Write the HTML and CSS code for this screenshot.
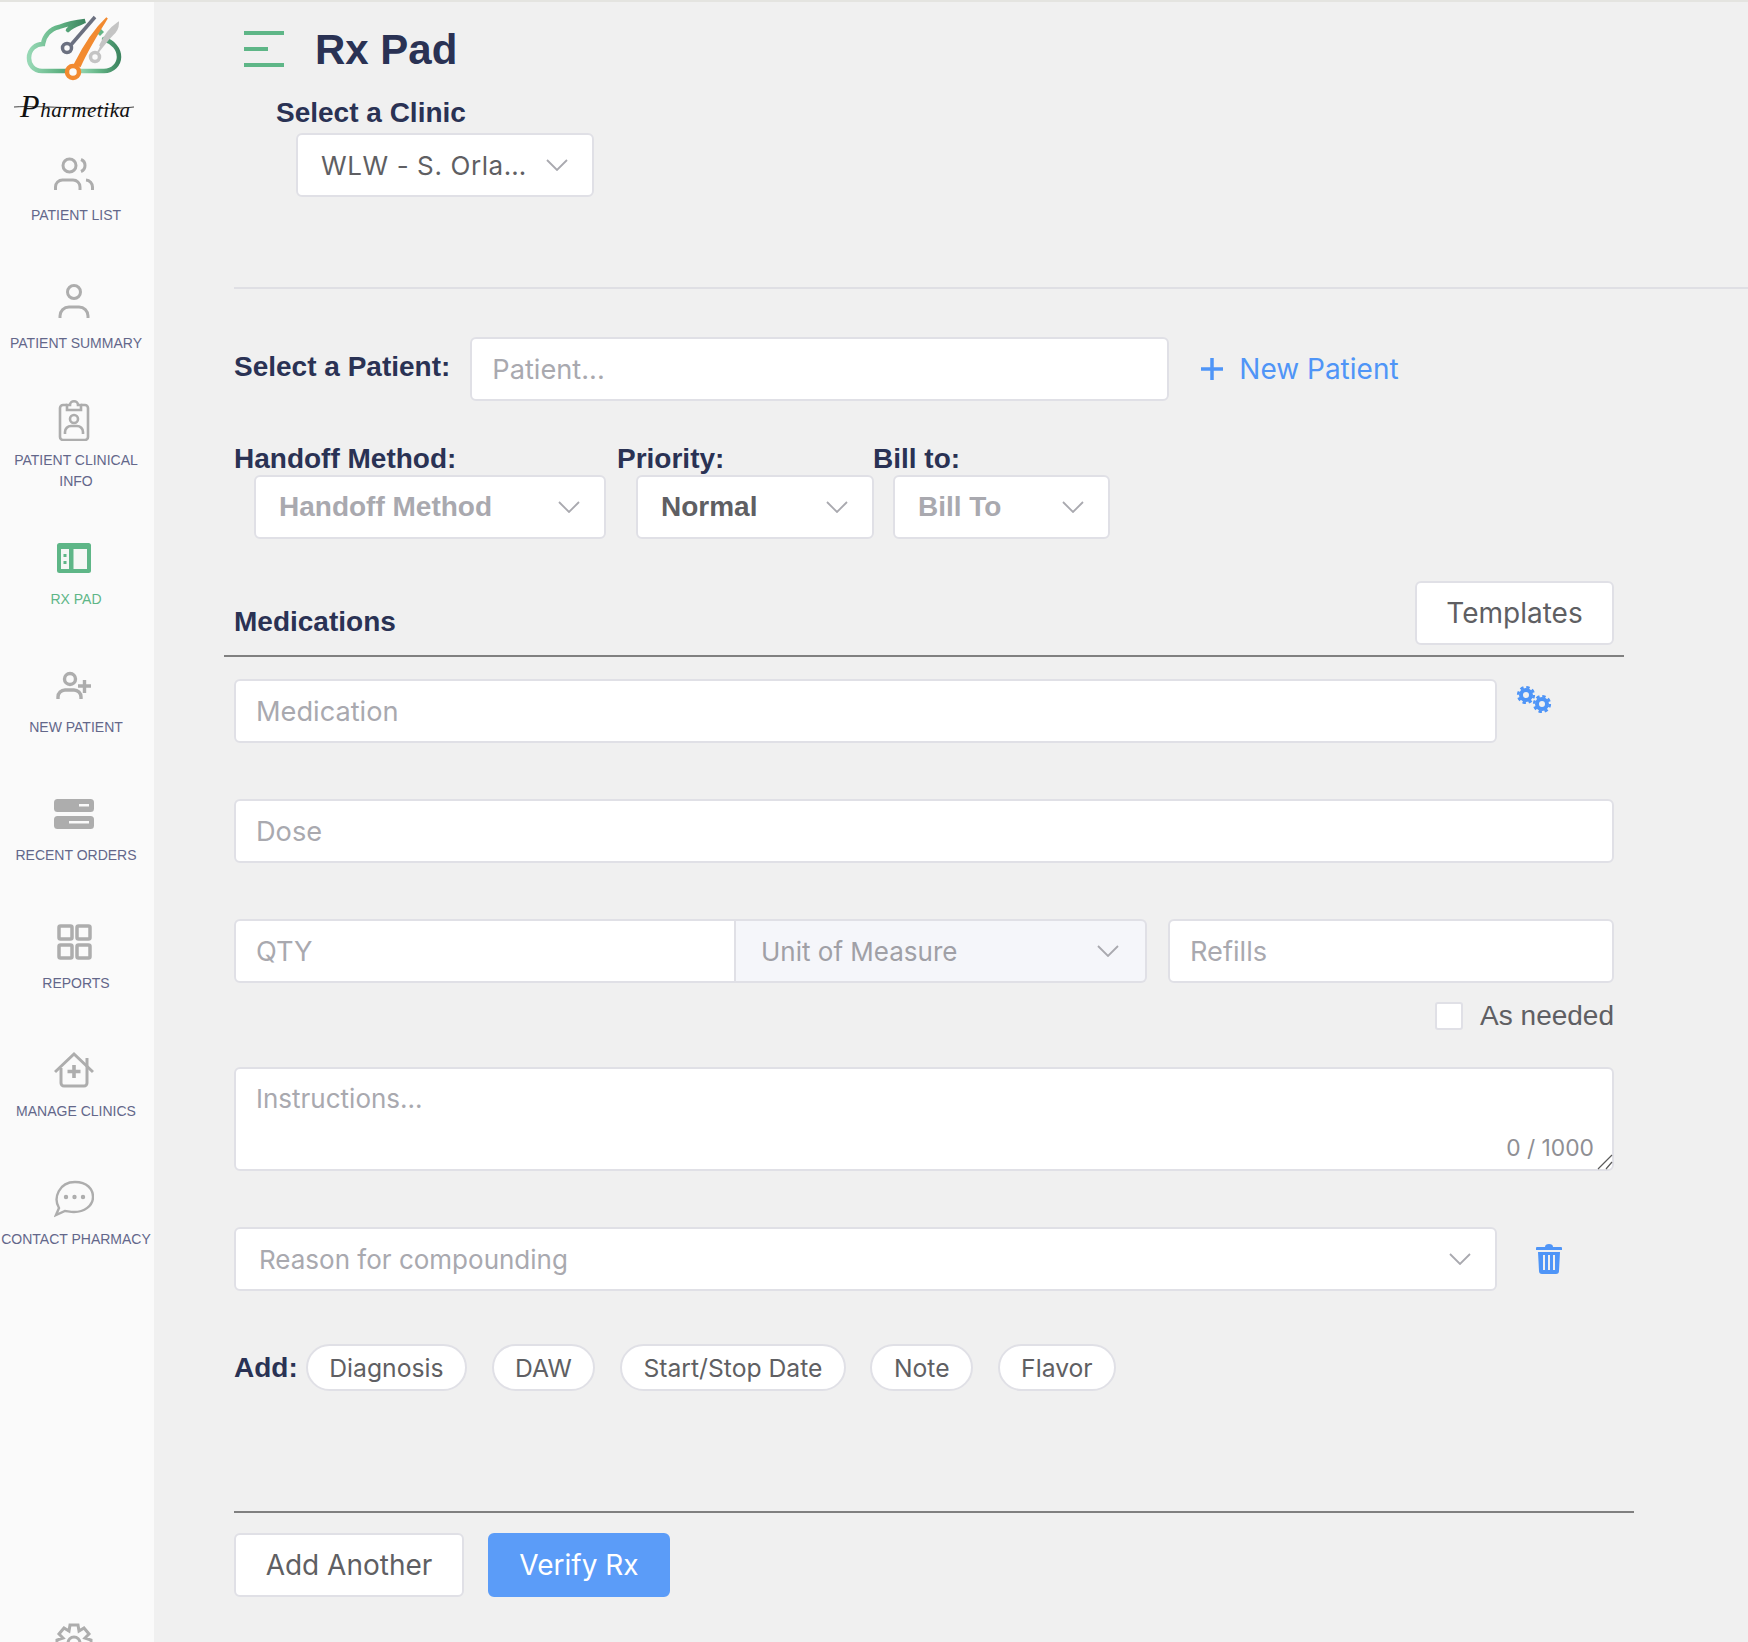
FILE: index.html
```html
<!DOCTYPE html>
<html lang="en">
<head>
  <meta charset="utf-8">
  <title>Rx Pad</title>
  <link rel="stylesheet" href="styles.css">
</head>
<body>
<div class="page">
  <nav class="sidebar">
    <div class="logo">
      <svg width="154" height="122" viewBox="0 0 154 122">
        <defs>
          <linearGradient id="cloudGrad" x1="0" x2="1" y1="0" y2="0">
            <stop offset="0" stop-color="#97d8b5"/>
            <stop offset="0.5" stop-color="#63b586"/>
            <stop offset="1" stop-color="#3d8560"/>
          </linearGradient>
        </defs>
        <path d="M68 69H42C33 69 29 62 29 56C29 47 36 42 43 42C44 34 50 27 59 25C67 22 76 20 85 19C78 22 71 24 68 28" fill="none" stroke="url(#cloudGrad)" stroke-width="4.5" stroke-linecap="round"/>
        <path d="M79 69H104C113 69 119 62 119 55C119 47 113 40 104 37" fill="none" stroke="url(#cloudGrad)" stroke-width="4.5" stroke-linecap="round"/>
        <path d="M100 26L104 30L100 34L96 30Z" fill="#63b586"/>
        <path d="M70 44L95 15" stroke="#6b7080" stroke-width="3.5"/>
        <circle cx="67" cy="46" r="4.5" fill="#fafafa" stroke="#6b7080" stroke-width="3.5"/>
        <path d="M98 50C104 42 108 37 112 33C118 28 118 24 118 21C109 27 103 37 100 44" fill="#c4c4c4" stroke="#c4c4c4" stroke-width="2"/>
        <circle cx="95" cy="55" r="4.5" fill="#fafafa" stroke="#c4c4c4" stroke-width="3.5"/>
        <path d="M75 62C82 48 92 30 107 16C97 32 88 46 80 64Z" fill="#f28a30" stroke="#f28a30" stroke-width="2"/>
        <circle cx="73" cy="70" r="6" fill="#fafafa" stroke="#f28a30" stroke-width="4.5"/>
        <path d="M14 105C40 103 100 109 134 105" fill="none" stroke="#111" stroke-width="0.8"/>
        <text x="20" y="115" class="logo-script"><tspan class="logo-cap">P</tspan>harmetika</text>
      </svg>
    </div>

    <a class="nav-item">
      <svg class="nav-icon" width="40" height="40" viewBox="0 0 40 40" fill="none" stroke="#adadad" stroke-width="3">
        <circle cx="15.500" cy="11.500" r="6.500"/>
        <path d="M27 5.500a6.500 6.500 0 0 1 0 12"/>
        <path d="M1.500 36V33a7 7 0 0 1 7-7H19a7 7 0 0 1 7 7v3"/>
        <path d="M32 26a7 7 0 0 1 6.500 7v3"/>
      </svg>
      <span class="nav-label">PATIENT LIST</span>
    </a>
    <a class="nav-item">
      <svg class="nav-icon" width="40" height="40" viewBox="0 0 40 40" fill="none" stroke="#adadad" stroke-width="3">
        <circle cx="20" cy="10" r="6.500"/>
        <path d="M6 36V34a9 9 0 0 1 9-9H25a9 9 0 0 1 9 9v2"/>
      </svg>
      <span class="nav-label">PATIENT SUMMARY</span>
    </a>
    <a class="nav-item nav-item-tall">
      <svg class="nav-icon" width="40" height="42" viewBox="0 0 40 42" fill="none" stroke="#adadad" stroke-width="2.600">
        <path d="M13 6H9a3 3 0 0 0-3 3V38a3 3 0 0 0 3 3H31a3 3 0 0 0 3-3V9a3 3 0 0 0-3-3H27"/>
        <path d="M13 11V6H16C16 1 24 1 24 6H27V11Z"/>
        <circle cx="20" cy="20" r="4"/>
        <path d="M11 35V33a6 6 0 0 1 6-6H23a6 6 0 0 1 6 6v2"/>
      </svg>
      <span class="nav-label">PATIENT CLINICAL INFO</span>
    </a>
    <a class="nav-item nav-item-active">
      <svg class="nav-icon" width="40" height="40" viewBox="0 0 40 40">
        <rect x="3" y="5" width="34" height="30" rx="2.500" fill="#5eb687"/>
        <rect x="7" y="11" width="8" height="20" fill="#f5f7f5"/>
        <rect x="19.500" y="11" width="13.500" height="20" fill="#f5f7f5"/>
        <rect x="9.500" y="16" width="3" height="3" fill="#5eb687"/>
        <rect x="9.500" y="23" width="3" height="3" fill="#5eb687"/>
      </svg>
      <span class="nav-label">RX PAD</span>
    </a>
    <a class="nav-item">
      <svg class="nav-icon" width="40" height="40" viewBox="0 0 40 40" fill="none" stroke="#adadad" stroke-width="3.400">
        <circle cx="16" cy="13" r="5.500"/>
        <path d="M4 33V31a7 7 0 0 1 7-7H20a7 7 0 0 1 7 7v2"/>
        <path d="M24 20H37M30.500 14V27"/>
      </svg>
      <span class="nav-label">NEW PATIENT</span>
    </a>
    <a class="nav-item">
      <svg class="nav-icon" width="40" height="40" viewBox="0 0 40 40">
        <rect x="0" y="5" width="40" height="13" rx="3.500" fill="#adadad"/>
        <rect x="0" y="22" width="40" height="13" rx="3.500" fill="#adadad"/>
        <rect x="25" y="10" width="10" height="2.500" fill="#fafafa"/>
        <rect x="15" y="27" width="20" height="2.500" fill="#fafafa"/>
      </svg>
      <span class="nav-label">RECENT ORDERS</span>
    </a>
    <a class="nav-item">
      <svg class="nav-icon" width="40" height="40" viewBox="0 0 40 40" fill="none" stroke="#adadad" stroke-width="3.500">
        <rect x="5" y="4" width="13" height="13" rx="1.500"/>
        <rect x="23" y="4" width="13" height="13" rx="1.500"/>
        <rect x="5" y="23" width="13" height="13" rx="1.500"/>
        <rect x="23" y="23" width="13" height="13" rx="1.500"/>
      </svg>
      <span class="nav-label">REPORTS</span>
    </a>
    <a class="nav-item">
      <svg class="nav-icon" width="40" height="40" viewBox="0 0 40 40" fill="none" stroke="#adadad" stroke-width="3">
        <path d="M1 22L20 4L39 22"/>
        <path d="M7 18V33a3 3 0 0 0 3 3H30a3 3 0 0 0 3-3V8"/>
        <path d="M20 15V28M13.500 21.500H26.500" stroke-width="3.600"/>
      </svg>
      <span class="nav-label">MANAGE CLINICS</span>
    </a>
    <a class="nav-item">
      <svg class="nav-icon" width="40" height="40" viewBox="0 0 40 40" fill="none" stroke="#adadad" stroke-width="2.400">
        <path d="M5 30C-1 20 5 4 21 4C33 4 39 11 39 19C39 28 30 34 20 34C16 34 13 33 11 33L2 37Z"/>
        <circle cx="12" cy="19" r="1"/>
        <circle cx="20.500" cy="19" r="1"/>
        <circle cx="29" cy="19" r="1"/>
      </svg>
      <span class="nav-label">CONTACT PHARMACY</span>
    </a>
    <a class="nav-settings">
      <svg width="40" height="40" viewBox="0 0 40 40" fill="none" stroke="#adadad" stroke-width="3">
        <path d="M16 2H24L25 8L30 5L35 11L31 15L37 17V24L31 25L35 30L30 35L25 32L24 38H16L15 32L10 35L5 30L9 25L3 24V17L9 15L5 11L10 5L15 8Z"/>
        <circle cx="20" cy="20" r="6"/>
      </svg>
    </a>
  </nav>

  <main class="content">
    <header class="page-head">
      <div class="burger"><i></i><i class="short"></i><i></i></div>
      <h1 class="page-title">Rx Pad</h1>
    </header>
    <div class="clinic">
      <div class="clinic-label">Select a Clinic</div>
      <div class="select clinic-select"><span>WLW - S. Orla…</span>
        <svg class="chev" width="22" height="12" viewBox="0 0 22 12"><path d="M1 1L11 11L21 1"/></svg>
      </div>
    </div>
    <div class="rule-light"></div>

    <div class="form">
      <div class="patient-row">
        <label class="label">Select a Patient:</label>
        <input class="field patient-input" placeholder="Patient...">
        <a class="new-patient">
          <svg width="24" height="24" viewBox="0 0 24 24"><path d="M12 1V23M1 12H23" stroke="#4f95f7" stroke-width="3.500"/></svg>
          New Patient
        </a>
      </div>

      <div class="handoff-row">
        <div class="handoff-col">
          <div class="label">Handoff Method:</div>
          <div class="select select-handoff strong muted"><span>Handoff Method</span>
            <svg class="chev" width="22" height="12" viewBox="0 0 22 12"><path d="M1 1L11 11L21 1"/></svg>
          </div>
        </div>
        <div class="handoff-col priority-col">
          <div class="label">Priority:</div>
          <div class="select select-priority strong"><span>Normal</span>
            <svg class="chev" width="22" height="12" viewBox="0 0 22 12"><path d="M1 1L11 11L21 1"/></svg>
          </div>
        </div>
        <div class="handoff-col">
          <div class="label">Bill to:</div>
          <div class="select select-bill strong muted"><span>Bill To</span>
            <svg class="chev" width="22" height="12" viewBox="0 0 22 12"><path d="M1 1L11 11L21 1"/></svg>
          </div>
        </div>
      </div>

      <div class="med-head">
        <h2 class="label">Medications</h2>
        <button class="btn btn-templates">Templates</button>
      </div>
      <div class="rule-dark med-rule"></div>

      <div class="med-row">
        <input class="field grow-field" placeholder="Medication">
        <svg class="cogs" width="36" height="30" viewBox="0 0 36 30">
          <g fill="none" stroke="#4f95f7">
            <circle cx="10" cy="10" r="7.800" stroke-width="2.600" stroke-dasharray="3.400 2.730"/>
            <circle cx="10" cy="10" r="5" stroke-width="4"/>
            <circle cx="26" cy="19" r="7.800" stroke-width="2.600" stroke-dasharray="3.400 2.730"/>
            <circle cx="26" cy="19" r="5" stroke-width="4"/>
          </g>
        </svg>
      </div>

      <input class="field dose" placeholder="Dose">

      <div class="qty-row">
        <div class="qty-group">
          <input class="field qty" placeholder="QTY">
          <div class="select unit"><span>Unit of Measure</span>
            <svg class="chev" width="22" height="12" viewBox="0 0 22 12"><path d="M1 1L11 11L21 1"/></svg>
          </div>
        </div>
        <input class="field refills" placeholder="Refills">
      </div>

      <div class="needed-row">
        <span class="check"></span>
        <span class="needed-text">As needed</span>
      </div>

      <div class="instructions">
        <textarea class="field notes" placeholder="Instructions..."></textarea>
        <span class="counter">0 / 1000</span>
        <svg class="grip" width="16" height="16" viewBox="0 0 16 16"><path d="M1 15L15 1M9 15L15 8" stroke="#5a5a5a" stroke-width="1.200"/></svg>
      </div>

      <div class="reason-row">
        <div class="select reason muted"><span>Reason for compounding</span>
          <svg class="chev" width="22" height="12" viewBox="0 0 22 12"><path d="M1 1L11 11L21 1"/></svg>
        </div>
        <svg class="trash" width="26" height="30" viewBox="0 0 26 30">
          <path d="M9 3a4 3 0 0 1 8 0h8a1 1 0 0 1 1 1v2H0V4a1 1 0 0 1 1-1Z" fill="#4f95f7"/>
          <path d="M2 8H24L23 27a3 3 0 0 1-3 3H6a3 3 0 0 1-3-3Z" fill="#4f95f7"/>
          <path d="M8 11V26M13 11V26M18 11V26" stroke="#f0f0f0" stroke-width="2"/>
        </svg>
      </div>

      <div class="add-row">
        <span class="label">Add:</span>
        <button class="pill pill-first">Diagnosis</button>
        <button class="pill">DAW</button>
        <button class="pill">Start/Stop Date</button>
        <button class="pill">Note</button>
        <button class="pill">Flavor</button>
      </div>

      <div class="rule-dark foot-rule"></div>

      <div class="foot-row">
        <button class="btn btn-another">Add Another</button>
        <button class="btn btn-verify">Verify Rx</button>
      </div>
    </div>
  </main>
</div>
</body>
</html>
```

FILE: styles.css
```css
* {
  box-sizing: border-box;
}

html, body {
  margin: 0;
  height: 100%;
  overflow: hidden;
}

body {
  font-family: Inter, "Liberation Sans", sans-serif;
  background: #f0f0f0;
  color: #5f5f63;
  border-top: 2px solid #e4e4e0;
}

.page {
  display: flex;
  height: 1640px;
}

/* sidebar */
.sidebar {
  width: 154px;
  flex-shrink: 0;
  background: #fafafa;
  display: flex;
  flex-direction: column;
}

.logo {
  height: 122px;
}

.logo svg {
  display: block;
}

.logo-script {
  font-family: "Liberation Serif", serif;
  font-style: italic;
  font-size: 21px;
  letter-spacing: 0.6px;
  fill: #111;
}

.logo-cap {
  font-size: 32px;
}

.nav-item {
  height: 128px;
  padding: 30px 2px 0 0;
  display: flex;
  flex-direction: column;
  align-items: center;
  gap: 11px;
  flex-shrink: 0;
}

.nav-item-tall {
  padding-top: 19px;
  gap: 9px;
}

.nav-icon {
  display: block;
  margin-right: 4px;
  flex-shrink: 0;
}

.nav-label {
  font-family: "Liberation Sans", sans-serif;
  font-size: 14px;
  line-height: 21px;
  color: #63678a;
  text-align: center;
  white-space: nowrap;
  max-width: 150px;
}

.nav-item-tall .nav-label {
  white-space: normal;
}

.nav-item-active .nav-label {
  color: #5eb687;
}

.nav-settings {
  padding-top: 347px;
  padding-left: 54px;
}

/* header */
.content {
  flex: 1;
  min-width: 0;
}

.page-head {
  display: flex;
  align-items: center;
  height: 96px;
  margin-bottom: -3px;
  padding-left: 90px;
}

.burger {
  width: 40px;
  display: flex;
  flex-direction: column;
  gap: 12px;
  margin-top: -2px;
}

.burger i {
  display: block;
  height: 4px;
  background: #5eb687;
}

.burger .short {
  width: 24px;
}

.page-title {
  margin: 0 0 0 31px;
  font-family: "Liberation Sans", sans-serif;
  font-size: 42px;
  font-weight: 700;
  color: #2a3254;
}

.clinic {
  padding-left: 122px;
  height: 192px;
}

.clinic-label {
  font-family: "Liberation Sans", sans-serif;
  font-size: 28px;
  font-weight: 700;
  line-height: 36px;
  margin-bottom: 2px;
  color: #2a3254;
}

.clinic-select {
  width: 298px;
  margin-left: 20px;
  padding-left: 20px;
  font-family: "Liberation Sans", sans-serif;
  font-size: 27px;
  letter-spacing: 0.6px;
}

.rule-light {
  height: 2px;
  margin-left: 80px;
  background: #dfdfe4;
}

/* form controls */
.form {
  width: 1380px;
  margin-left: 80px;
}

.label {
  margin: 0;
  font-family: "Liberation Sans", sans-serif;
  font-size: 28px;
  font-weight: 700;
  color: #2a3254;
  white-space: nowrap;
}

.field,
.select {
  height: 64px;
  border: 2px solid #e0e0e6;
  border-radius: 6px;
  background: #fff;
  font-family: Inter, "Liberation Sans", sans-serif;
  color: #5f5f63;
  outline: none;
}

.field {
  padding: 0 20px;
  display: block;
  width: 100%;
  font-size: 27.2px;
}

.field::placeholder {
  color: #a9a9af;
  opacity: 1;
}

.select {
  display: flex;
  align-items: center;
  justify-content: space-between;
  padding: 0 24px 0 23px;
  font-size: 26px;
  white-space: nowrap;
}

.select.muted {
  color: #a9a9af;
}

.select.strong {
  font-family: "Liberation Sans", sans-serif;
  font-weight: 700;
  font-size: 28px;
}

.chev {
  flex-shrink: 0;
}

.chev path {
  fill: none;
  stroke: #a9a9af;
  stroke-width: 1.800;
}

.patient-row {
  display: flex;
  align-items: center;
  margin-top: 48px;
  height: 64px;
}

.patient-row .label {
  margin-top: -4px;
}

.patient-input {
  width: 699px;
  margin-left: 20px;
}

.new-patient {
  display: flex;
  align-items: center;
  gap: 15px;
  margin-left: 31px;
  color: #4f95f7;
  font-size: 28px;
}

.handoff-row {
  display: flex;
  margin-top: 42px;
  gap: 11px;
}

.priority-col {
  margin-right: -12px;
}

.handoff-col .label {
  line-height: 32px;
}

.handoff-col .select {
  margin-left: 20px;
}

.priority-col .select {
  margin-left: 19px;
}

.select-handoff { width: 352px; }
.select-priority { width: 238px; }
.select-bill { width: 217px; }

.med-head {
  display: flex;
  justify-content: space-between;
  align-items: flex-end;
  margin-top: 42px;
}

.med-head .label {
  font-size: 28px;
  line-height: 48px;
  margin-bottom: -1px;
}

.btn {
  border: 2px solid #e0e0e6;
  border-radius: 6px;
  background: #fff;
  font-family: Inter, "Liberation Sans", sans-serif;
  font-size: 28px;
  color: #5f5f63;
}

.btn-templates {
  width: 199px;
  height: 64px;
}

.rule-dark {
  height: 2px;
  background: #808080;
}

.med-rule {
  margin: 10px -10px 0;
}

.med-row {
  display: flex;
  margin-top: 22px;
}

.grow-field {
  width: 1263px;
}

.cogs {
  margin: 6px 0 0 19px;
}

.dose {
  margin-top: 56px;
}

.qty-row {
  display: flex;
  gap: 21px;
  margin-top: 56px;
}

.qty-group {
  display: flex;
  width: 913px;
}

.qty {
  width: 502px;
  border-radius: 6px 0 0 6px;
}

.unit {
  width: 411px;
  border-left: 0;
  border-radius: 0 6px 6px 0;
  background: #f5f6fa;
  color: #a0a0a6;
  padding-left: 25px;
  padding-right: 26px;
}

.refills {
  flex: 1;
  width: 0;
  min-width: 0;
}

.needed-row {
  display: flex;
  justify-content: flex-end;
  align-items: center;
  gap: 17px;
  height: 28px;
  margin-top: 19px;
}

.check {
  width: 28px;
  height: 28px;
  border: 2px solid #e0e0e6;
  border-radius: 3px;
  background: #fff;
}

.needed-text {
  font-family: "Liberation Sans", sans-serif;
  font-size: 28px;
}

.instructions {
  position: relative;
  margin-top: 37px;
}

.notes {
  height: 104px;
  padding-top: 14px;
  resize: none;
  font-size: 26px;
}

.counter {
  position: absolute;
  right: 20px;
  bottom: 10px;
  font-size: 22.8px;
  color: #8f8f94;
}

.grip {
  position: absolute;
  right: 1px;
  bottom: 1px;
}

.reason-row {
  display: flex;
  align-items: center;
  margin-top: 56px;
}

.reason {
  width: 1263px;
}

.trash {
  margin: -1px 0 0 39px;
}

.add-row {
  display: flex;
  align-items: center;
  margin-top: 53px;
  gap: 24.5px;
}

.add-row .label {
  margin-right: -16.5px;
}

.pill {
  height: 47px;
  padding: 0 21.5px;
  border: 2px solid #e0e0e6;
  border-radius: 24px;
  background: #fff;
  font-family: Inter, "Liberation Sans", sans-serif;
  font-size: 24.700px;
  color: #5f5f63;
}

.foot-rule {
  width: 1400px;
  margin-top: 120px;
}

.foot-row {
  display: flex;
  gap: 24px;
  margin-top: 20px;
}

.btn-another {
  width: 230px;
  height: 64px;
}

.btn-verify {
  width: 182px;
  height: 64px;
  background: #5b9cf8;
  border-color: #5b9cf8;
  color: #fff;
}
```
